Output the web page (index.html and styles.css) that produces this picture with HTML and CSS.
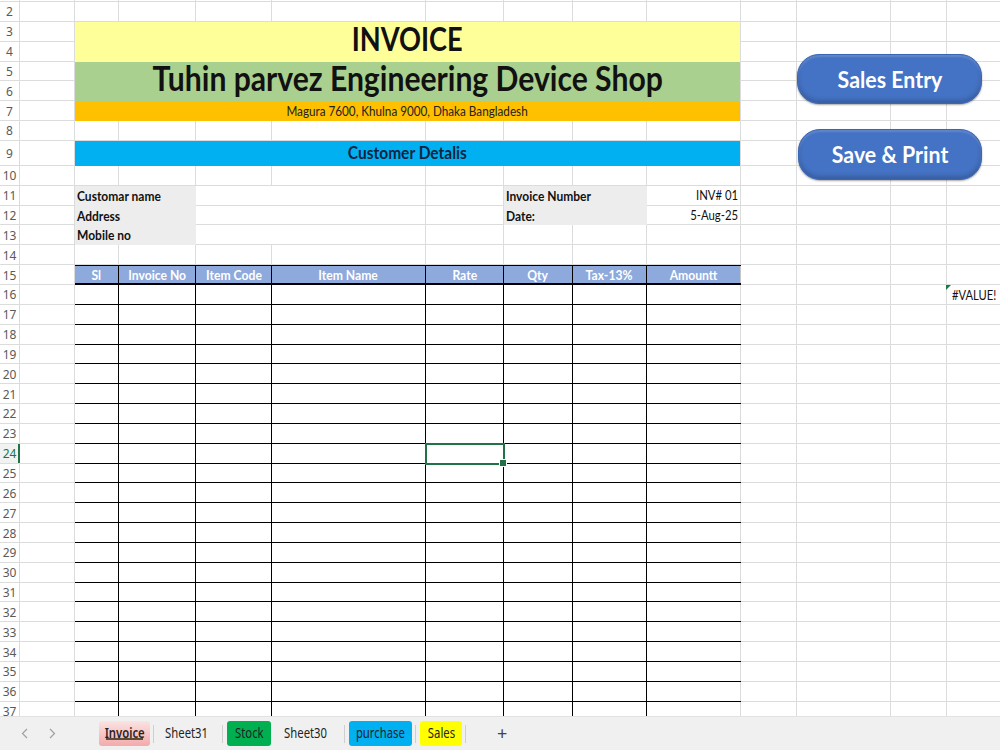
FILE: index.html
```html
<!DOCTYPE html>
<html lang="en">
<head>
<meta charset="utf-8">
<title>Invoice</title>
<link rel="stylesheet" href="styles.css">
</head>
<body>
<div class="app">
  <div class="sheet">
    <div class="row strip"></div>
    <div class="row"><div class="rh">2</div></div>
    <div class="row x2">
      <div class="rh"><span>3</span><span>4</span></div>
      <div class="band yellow lift"><span class="t c title">INVOICE</span></div>
    </div>
    <div class="row x2">
      <div class="rh"><span>5</span><span>6</span></div>
      <div class="band green lift2"><span class="t c shop">Tuhin parvez Engineering Device Shop</span></div>
    </div>
    <div class="row">
      <div class="rh">7</div>
      <div class="band orange"><span class="t c addr">Magura 7600, Khulna 9000, Dhaka Bangladesh</span></div>
    </div>
    <div class="row"><div class="rh">8</div></div>
    <div class="row tall">
      <div class="rh">9</div>
      <div class="band cyan"><span class="t c section">Customer Detalis</span></div>
    </div>
    <div class="row"><div class="rh">10</div></div>
    <div class="row">
      <div class="rh">11</div>
      <div class="lbl"><span class="t l">Customar name</span></div>
      <div class="blank"></div>
      <div class="lbl2"><span class="t l">Invoice Number</span></div>
      <div class="val"><span class="t r">INV# 01</span></div>
    </div>
    <div class="row">
      <div class="rh">12</div>
      <div class="lbl"><span class="t l">Address</span></div>
      <div class="blank"></div>
      <div class="lbl2"><span class="t l">Date:</span></div>
      <div class="val"><span class="t r">5-Aug-25</span></div>
    </div>
    <div class="row">
      <div class="rh">13</div>
      <div class="lbl"><span class="t l">Mobile no</span></div>
      <div class="blank"></div>
    </div>
    <div class="row"><div class="rh">14</div></div>
    <div class="row">
      <div class="rh">15</div>
      <div class="thead">
        <div><span class="t c">Sl</span></div>
        <div><span class="t c">Invoice No</span></div>
        <div><span class="t c">Item Code</span></div>
        <div><span class="t c">Item Name</span></div>
        <div><span class="t c">Rate</span></div>
        <div><span class="t c">Qty</span></div>
        <div><span class="t c">Tax-13%</span></div>
        <div><span class="t c">Amountt</span></div>
      </div>
    </div>
    <div class="row">
      <div class="rh">16</div>
      <div class="trow"></div>
      <div class="err"><span class="t l">#VALUE!</span></div>
    </div>
    <div class="row"><div class="rh">17</div><div class="trow"></div></div>
    <div class="row"><div class="rh">18</div><div class="trow"></div></div>
    <div class="row"><div class="rh">19</div><div class="trow"></div></div>
    <div class="row"><div class="rh">20</div><div class="trow"></div></div>
    <div class="row"><div class="rh">21</div><div class="trow"></div></div>
    <div class="row"><div class="rh">22</div><div class="trow"></div></div>
    <div class="row"><div class="rh">23</div><div class="trow"></div></div>
    <div class="row">
      <div class="rh on">24</div>
      <div class="trow"><div class="sel"></div></div>
    </div>
    <div class="row"><div class="rh">25</div><div class="trow"></div></div>
    <div class="row"><div class="rh">26</div><div class="trow"></div></div>
    <div class="row"><div class="rh">27</div><div class="trow"></div></div>
    <div class="row"><div class="rh">28</div><div class="trow"></div></div>
    <div class="row"><div class="rh">29</div><div class="trow"></div></div>
    <div class="row"><div class="rh">30</div><div class="trow"></div></div>
    <div class="row"><div class="rh">31</div><div class="trow"></div></div>
    <div class="row"><div class="rh">32</div><div class="trow"></div></div>
    <div class="row"><div class="rh">33</div><div class="trow"></div></div>
    <div class="row"><div class="rh">34</div><div class="trow"></div></div>
    <div class="row"><div class="rh">35</div><div class="trow"></div></div>
    <div class="row"><div class="rh">36</div><div class="trow"></div></div>
    <div class="row"><div class="rh">37</div><div class="trow"></div></div>

    <button class="shape sales"><span class="t c">Sales Entry</span></button>
    <button class="shape print"><span class="t c">Save &amp; Print</span></button>
  </div>

  <div class="tabs">
    <span class="nav"><svg width="7" height="11" viewBox="0 0 7 11"><path d="M6 1 1.5 5.5 6 10" fill="none" stroke="#a0a0a0" stroke-width="1.2"/></svg></span>
    <span class="nav"><svg width="7" height="11" viewBox="0 0 7 11"><path d="M1 1 5.5 5.5 1 10" fill="none" stroke="#a0a0a0" stroke-width="1.2"/></svg></span>
    <span class="tab active"><span class="t c">Invoice</span></span>
    <span class="sep"></span>
    <span class="tab w31"><span class="t c">Sheet31</span></span>
    <span class="sep"></span>
    <span class="tab stock"><span class="t c">Stock</span></span>
    <span class="tab w30"><span class="t c">Sheet30</span></span>
    <span class="sep"></span>
    <span class="tab purchase"><span class="t c">purchase</span></span>
    <span class="sep"></span>
    <span class="tab salestab"><span class="t c">Sales</span></span>
    <span class="sep"></span>
    <span class="add">+</span>
  </div>
</div>
</body>
</html>
```

FILE: styles.css
```css
:root {
  --grid: #dcdcdc;
  --line: linear-gradient(var(--grid), var(--grid));
  /* column gridlines: row header, A..L right edges */
  --vlines:
    var(--line) 19px 0 / 1px 100% no-repeat,
    var(--line) 74px 0 / 1px 100% no-repeat,
    var(--line) 118px 0 / 1px 100% no-repeat,
    var(--line) 195px 0 / 1px 100% no-repeat,
    var(--line) 271px 0 / 1px 100% no-repeat,
    var(--line) 425px 0 / 1px 100% no-repeat,
    var(--line) 503px 0 / 1px 100% no-repeat,
    var(--line) 572px 0 / 1px 100% no-repeat,
    var(--line) 646px 0 / 1px 100% no-repeat,
    var(--line) 740px 0 / 1px 100% no-repeat,
    var(--line) 796px 0 / 1px 100% no-repeat,
    var(--line) 890px 0 / 1px 100% no-repeat,
    var(--line) 946px 0 / 1px 100% no-repeat;
  --rowh: 19.85px;
}

* { box-sizing: border-box; }

html, body {
  margin: 0;
  padding: 0;
  background: #fff;
}

body {
  width: 1000px;
  height: 750px;
  overflow: hidden;
  font-family: Lato, "Liberation Sans", sans-serif;
  color: #111;
}

.app {
  display: flex;
  flex-direction: column;
  height: 750px;
}

/* ---------- worksheet ---------- */
.sheet {
  position: relative;
  height: 716px;
  overflow: hidden;
  flex: none;
}

.row {
  display: grid;
  grid-template-columns: 20px 55px 44px 77px 76px 154px 78px 69px 74px 94px 56px 94px 56px 1fr;
  grid-template-rows: minmax(0, 1fr);
  height: var(--rowh);
  background: var(--vlines), var(--line) 0 100% / 100% 1px no-repeat;
}

.row.strip { height: 2px; }
.row.tall { height: 25px; }
.row.x2 {
  height: calc(var(--rowh) * 2);
  background: var(--vlines),
    var(--line) 0 18.85px / 100% 1px no-repeat,
    var(--line) 0 100% / 100% 1px no-repeat;
}

/* row numbers */
.rh {
  grid-column: 1;
  display: flex;
  flex-direction: column;
  justify-content: center;
  align-items: center;
  padding-right: 1px;
  font-family: "Noto Sans", "DejaVu Sans", sans-serif;
  font-size: 12px;
  color: #5a5a5a;
}
.rh span {
  height: var(--rowh);
  display: flex;
  align-items: center;
}
.rh.on {
  color: #217346;
  background: #f1f3f2;
  box-shadow: inset -2px 0 #217346;
  margin-bottom: 1px;
}

/* condensed text runs */
.t {
  display: inline-block;
  white-space: nowrap;
  transform: scaleX(var(--sx, .89));
}
.t.c { transform-origin: 50% 50%; }
.t.l { transform-origin: 0 50%; }
.t.r { transform-origin: 100% 50%; }

/* merged title bands, columns B..I */
.band {
  grid-column: 3 / 11;
  margin-right: 1px;
  display: flex;
  align-items: center;
  justify-content: center;
  font-weight: 700;
}
.band.lift { padding-bottom: 6px; }
.band.lift2 { padding-bottom: 7px; }
.yellow { background: #ffff99; }
.green { background: #a9d08e; }
.orange { background: #ffc000; }
.cyan { background: #00b0f0; }

.title { font-size: 32px; line-height: 1; --sx: .85; }
.shop { font-size: 35px; line-height: 1; --sx: .86; }
.addr { font-size: 13px; font-weight: 400; color: #222; --sx: .9; }
.section { font-size: 16.5px; color: #10243f; --sx: .94; }

/* customer details */
.lbl, .lbl2, .val {
  display: flex;
  align-items: center;
  font-size: 13.5px;
}
.lbl {
  grid-column: 3 / 5;
  background: #ededed;
  padding-left: 2px;
  font-weight: 700;
}
.lbl2 {
  grid-column: 8 / 10;
  background: #ededed;
  padding-left: 2px;
  font-weight: 700;
}
.val {
  grid-column: 10;
  justify-content: flex-end;
  padding-right: 3px;
  padding-bottom: 1px;
  --sx: .84;
}
.blank {
  grid-column: 5 / 7;
  background: #fff;
  margin: 0 1px 1px 0;
}

/* item table */
.thead {
  grid-column: 3 / 11;
  display: grid;
  grid-template-columns: 44px 77px 76px 154px 78px 69px 74px 94px;
  background: #8ea9db;
  border-top: 1px solid #000;
  border-bottom: 2px solid #000;
}
.thead > div {
  display: flex;
  align-items: center;
  justify-content: center;
  border-right: 1px solid #000;
  color: #fff;
  font-weight: 700;
  font-size: 13.5px;
  --sx: .9;
}
.thead > div:last-child { border-right-color: #c6c6c6; }

.trow {
  grid-column: 3 / 11;
  display: grid;
  grid-template-columns: 44px 77px 76px 154px 78px 69px 74px 94px;
  border-bottom: 1px solid #000;
  background:
    linear-gradient(#000, #000) 43px 0 / 1px 100% no-repeat,
    linear-gradient(#000, #000) 120px 0 / 1px 100% no-repeat,
    linear-gradient(#000, #000) 196px 0 / 1px 100% no-repeat,
    linear-gradient(#000, #000) 350px 0 / 1px 100% no-repeat,
    linear-gradient(#000, #000) 428px 0 / 1px 100% no-repeat,
    linear-gradient(#000, #000) 497px 0 / 1px 100% no-repeat,
    linear-gradient(#000, #000) 571px 0 / 1px 100% no-repeat,
    var(--line) 665px 0 / 1px 100% no-repeat;
}

/* active cell F24 */
.sel {
  grid-column: 5;
  position: relative;
  margin: -1px -1px -2px -1px;
  border: 2px solid #217346;
}
.sel::after {
  content: "";
  position: absolute;
  right: -4px;
  bottom: -4px;
  width: 6px;
  height: 6px;
  background: #217346;
  border: 1px solid #fff;
}

/* error value in M16 */
.err {
  grid-column: 14;
  position: relative;
  display: flex;
  align-items: center;
  padding-left: 5px;
  font-size: 13px;
  color: #111;
  --sx: .86;
}
.err::before {
  content: "";
  position: absolute;
  left: -1px;
  top: 0;
  border-top: 5px solid #1e7a3c;
  border-right: 5px solid transparent;
}

/* floating macro buttons */
.shape {
  position: absolute;
  display: flex;
  align-items: center;
  justify-content: center;
  padding: 0;
  border: 1px solid #3b66b3;
  border-radius: 22px;
  background: #4472c4;
  color: #fff;
  font-family: Lato, "Liberation Sans", sans-serif;
  font-weight: 700;
  font-size: 22px;
  box-shadow:
    inset 0 -3px 4px rgba(0, 0, 0, .18),
    inset 0 2px 2px rgba(255, 255, 255, .16),
    0 1px 2px rgba(0, 0, 0, .35);
  --sx: .97;
}
.sales { left: 797px; top: 54px; width: 185px; height: 50px; }
.print { left: 798px; top: 129px; width: 184px; height: 51px; }

/* ---------- sheet tabs ---------- */
.tabs {
  flex: 1;
  display: flex;
  align-items: center;
  padding-left: 10px;
  background: #f0f0f0;
  border-top: 1px solid #e2e2e2;
  font-family: "Noto Sans", "DejaVu Sans", sans-serif;
  font-size: 14.5px;
  color: #222;
  --sx: .78;
}
.nav {
  width: 29px;
  display: flex;
  justify-content: center;
}
.nav:first-child { width: 28px; }
.tab {
  height: 25px;
  display: flex;
  align-items: center;
  justify-content: center;
  padding-bottom: 3px;
  border-radius: 3px;
}
.tab.active {
  position: relative;
  width: 51px;
  margin-left: 32px;
  background: linear-gradient(#fbe3e3, #f3aaaa);
  color: #2c1e1e;
  font-weight: 600;
}
.tab.active::after {
  content: "";
  position: absolute;
  left: 7px;
  right: 7px;
  bottom: 6px;
  height: 2px;
  background: #5a4c36;
}
.sep {
  width: 1px;
  height: 18px;
  margin-left: 3px;
  background: #cfcfcf;
}
.w31 { width: 65px; }
.stock { width: 44px; margin-left: 4px; background: #00b050; }
.w30 { width: 70px; }
.purchase { width: 63px; margin-left: 4px; background: #00b0f0; }
.salestab { width: 42px; margin-left: 4px; background: #ffff00; }
.add {
  margin-left: 31px;
  padding-bottom: 2px;
  font-size: 18px;
  color: #444;
}
```
